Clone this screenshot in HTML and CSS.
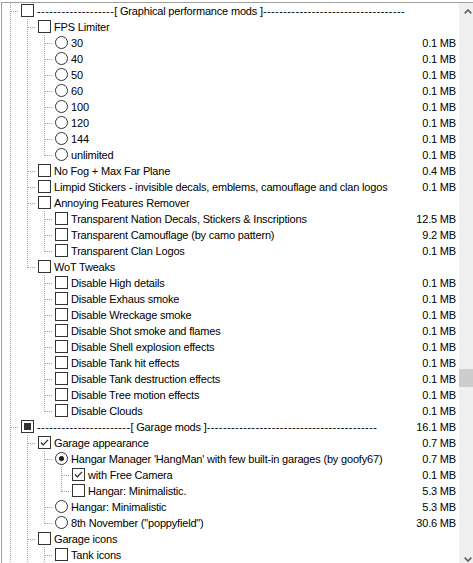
FILE: index.html
```html
<!DOCTYPE html>
<html>
<head>
<meta charset="utf-8">
<link rel="stylesheet" href="styles.css">
</head>
<body>
<div class="frame">
  <div class="tree">
    <div class="row"><span class="g tee"></span><span class="ic cb"></span><span class="lbl"><span class="dash">-------------------</span>[ Graphical performance mods ]<span class="dash">-----------------------------------</span></span></div>
    <div class="row"><span class="g pipe"></span><span class="g tee"></span><span class="ic cb"></span><span class="lbl">FPS Limiter</span></div>
    <div class="row"><span class="g pipe"></span><span class="g pipe"></span><span class="g tee"></span><span class="ic rb"></span><span class="lbl">30</span><span class="sz">0.1 MB</span></div>
    <div class="row"><span class="g pipe"></span><span class="g pipe"></span><span class="g tee"></span><span class="ic rb"></span><span class="lbl">40</span><span class="sz">0.1 MB</span></div>
    <div class="row"><span class="g pipe"></span><span class="g pipe"></span><span class="g tee"></span><span class="ic rb"></span><span class="lbl">50</span><span class="sz">0.1 MB</span></div>
    <div class="row"><span class="g pipe"></span><span class="g pipe"></span><span class="g tee"></span><span class="ic rb"></span><span class="lbl">60</span><span class="sz">0.1 MB</span></div>
    <div class="row"><span class="g pipe"></span><span class="g pipe"></span><span class="g tee"></span><span class="ic rb"></span><span class="lbl">100</span><span class="sz">0.1 MB</span></div>
    <div class="row"><span class="g pipe"></span><span class="g pipe"></span><span class="g tee"></span><span class="ic rb"></span><span class="lbl">120</span><span class="sz">0.1 MB</span></div>
    <div class="row"><span class="g pipe"></span><span class="g pipe"></span><span class="g tee"></span><span class="ic rb"></span><span class="lbl">144</span><span class="sz">0.1 MB</span></div>
    <div class="row"><span class="g pipe"></span><span class="g pipe"></span><span class="g end"></span><span class="ic rb"></span><span class="lbl">unlimited</span><span class="sz">0.1 MB</span></div>
    <div class="row"><span class="g pipe"></span><span class="g tee"></span><span class="ic cb"></span><span class="lbl">No Fog + Max Far Plane</span><span class="sz">0.4 MB</span></div>
    <div class="row"><span class="g pipe"></span><span class="g tee"></span><span class="ic cb"></span><span class="lbl">Limpid Stickers - invisible decals, emblems, camouflage and clan logos</span><span class="sz">0.1 MB</span></div>
    <div class="row"><span class="g pipe"></span><span class="g tee"></span><span class="ic cb"></span><span class="lbl">Annoying Features Remover</span></div>
    <div class="row"><span class="g pipe"></span><span class="g pipe"></span><span class="g tee"></span><span class="ic cb"></span><span class="lbl">Transparent Nation Decals, Stickers &amp; Inscriptions</span><span class="sz">12.5 MB</span></div>
    <div class="row"><span class="g pipe"></span><span class="g pipe"></span><span class="g tee"></span><span class="ic cb"></span><span class="lbl">Transparent Camouflage (by camo pattern)</span><span class="sz">9.2 MB</span></div>
    <div class="row"><span class="g pipe"></span><span class="g pipe"></span><span class="g end"></span><span class="ic cb"></span><span class="lbl">Transparent Clan Logos</span><span class="sz">0.1 MB</span></div>
    <div class="row"><span class="g pipe"></span><span class="g end"></span><span class="ic cb"></span><span class="lbl">WoT Tweaks</span></div>
    <div class="row"><span class="g pipe"></span><span class="g"></span><span class="g tee"></span><span class="ic cb"></span><span class="lbl">Disable High details</span><span class="sz">0.1 MB</span></div>
    <div class="row"><span class="g pipe"></span><span class="g"></span><span class="g tee"></span><span class="ic cb"></span><span class="lbl">Disable Exhaus smoke</span><span class="sz">0.1 MB</span></div>
    <div class="row"><span class="g pipe"></span><span class="g"></span><span class="g tee"></span><span class="ic cb"></span><span class="lbl">Disable Wreckage smoke</span><span class="sz">0.1 MB</span></div>
    <div class="row"><span class="g pipe"></span><span class="g"></span><span class="g tee"></span><span class="ic cb"></span><span class="lbl">Disable Shot smoke and flames</span><span class="sz">0.1 MB</span></div>
    <div class="row"><span class="g pipe"></span><span class="g"></span><span class="g tee"></span><span class="ic cb"></span><span class="lbl">Disable Shell explosion effects</span><span class="sz">0.1 MB</span></div>
    <div class="row"><span class="g pipe"></span><span class="g"></span><span class="g tee"></span><span class="ic cb"></span><span class="lbl">Disable Tank hit effects</span><span class="sz">0.1 MB</span></div>
    <div class="row"><span class="g pipe"></span><span class="g"></span><span class="g tee"></span><span class="ic cb"></span><span class="lbl">Disable Tank destruction effects</span><span class="sz">0.1 MB</span></div>
    <div class="row"><span class="g pipe"></span><span class="g"></span><span class="g tee"></span><span class="ic cb"></span><span class="lbl">Disable Tree motion effects</span><span class="sz">0.1 MB</span></div>
    <div class="row"><span class="g pipe"></span><span class="g"></span><span class="g end"></span><span class="ic cb"></span><span class="lbl">Disable Clouds</span><span class="sz">0.1 MB</span></div>
    <div class="row"><span class="g tee"></span><span class="ic cb mixed"></span><span class="lbl"><span class="dash">-----------------------</span>[ Garage mods ]<span class="dash">------------------------------------------</span></span><span class="sz">16.1 MB</span></div>
    <div class="row"><span class="g pipe"></span><span class="g tee"></span><span class="ic cb"><svg class="chk" viewBox="0 0 11 11"><path d="M2 5.5 L4.3 7.8 L9 2.8"/></svg></span><span class="lbl">Garage appearance</span><span class="sz">0.7 MB</span></div>
    <div class="row"><span class="g pipe"></span><span class="g pipe"></span><span class="g tee"></span><span class="ic rb on"></span><span class="lbl">Hangar Manager 'HangMan' with few built-in garages (by goofy67)</span><span class="sz">0.7 MB</span></div>
    <div class="row"><span class="g pipe"></span><span class="g pipe"></span><span class="g pipe"></span><span class="g tee"></span><span class="ic cb"><svg class="chk" viewBox="0 0 11 11"><path d="M2 5.5 L4.3 7.8 L9 2.8"/></svg></span><span class="lbl">with Free Camera</span><span class="sz">0.1 MB</span></div>
    <div class="row"><span class="g pipe"></span><span class="g pipe"></span><span class="g pipe"></span><span class="g end"></span><span class="ic cb"></span><span class="lbl">Hangar: Minimalistic.</span><span class="sz">5.3 MB</span></div>
    <div class="row"><span class="g pipe"></span><span class="g pipe"></span><span class="g tee"></span><span class="ic rb"></span><span class="lbl">Hangar: Minimalistic</span><span class="sz">5.3 MB</span></div>
    <div class="row"><span class="g pipe"></span><span class="g pipe"></span><span class="g end"></span><span class="ic rb"></span><span class="lbl">8th November ("poppyfield")</span><span class="sz">30.6 MB</span></div>
    <div class="row"><span class="g pipe"></span><span class="g tee"></span><span class="ic cb"></span><span class="lbl">Garage icons</span></div>
    <div class="row"><span class="g pipe"></span><span class="g pipe"></span><span class="g tee"></span><span class="ic cb"></span><span class="lbl">Tank icons</span></div>
  </div>
  <div class="scrollbar">
    <div class="sb-btn"><svg class="arrow" viewBox="0 0 8 5"><path d="M0.7 4.3 L4 1 L7.3 4.3"/></svg></div>
    <div class="sb-track"><div class="sb-thumb"></div></div>
    <div class="sb-btn"><svg class="arrow" viewBox="0 0 8 5"><path d="M0.7 0.7 L4 4 L7.3 0.7"/></svg></div>
  </div>
</div>
</body>
</html>
```

FILE: styles.css
```css
html, body {
  margin: 0;
  padding: 0;
  background: #ffffff;
  overflow: hidden;
  width: 473px;
  height: 563px;
}

.frame {
  margin: 2px 0 0 1px;
  width: 474px;
  height: 565px;
  border-top: 1px solid #a0a0a0;
  border-left: 1px solid #a0a0a0;
  display: flex;
  overflow: hidden;
}

.tree {
  width: 457px;
  flex: none;
  padding-right: 3px;
  box-sizing: border-box;
  font-family: "Liberation Sans", Arial, sans-serif;
  font-size: 11px;
  letter-spacing: -0.18px;
  color: #000000;
}

.row {
  display: flex;
  align-items: flex-start;
  height: 16px;
  line-height: 16px;
  white-space: nowrap;
}

.g {
  flex: none;
  width: 17px;
  height: 16px;
}

.pipe {
  background: repeating-linear-gradient(to bottom, #a0a0a0 0 1px, transparent 1px 2px) 8px 0 / 1px 16px no-repeat;
}

.tee {
  background:
    repeating-linear-gradient(to right, #a0a0a0 0 1px, transparent 1px 2px) 9px 8px / 8px 1px no-repeat,
    repeating-linear-gradient(to bottom, #a0a0a0 0 1px, transparent 1px 2px) 8px 0 / 1px 16px no-repeat;
}

.end {
  background:
    repeating-linear-gradient(to right, #a0a0a0 0 1px, transparent 1px 2px) 9px 8px / 8px 1px no-repeat,
    repeating-linear-gradient(to bottom, #a0a0a0 0 1px, transparent 1px 2px) 8px 0 / 1px 9px no-repeat;
}

.ic {
  flex: none;
  width: 13px;
  height: 13px;
  box-sizing: border-box;
  margin: 1px 3px 0 2px;
  border: 1px solid #333333;
  background: #ffffff;
  position: relative;
}

.rb {
  border-radius: 50%;
}

.rb.on::after {
  content: "";
  position: absolute;
  left: 3px;
  top: 3px;
  width: 5px;
  height: 5px;
  border-radius: 50%;
  background: #1a1a1a;
}

.cb.mixed::after {
  content: "";
  position: absolute;
  left: 2px;
  top: 2px;
  width: 7px;
  height: 7px;
  background: #333333;
}

.chk {
  display: block;
  width: 11px;
  height: 11px;
}

.chk path {
  fill: none;
  stroke: #222222;
  stroke-width: 1.2;
}

.lbl {
  flex: none;
}

.dash {
  letter-spacing: 0.4px;
}

.sz {
  margin-left: auto;
  flex: none;
}

.scrollbar {
  width: 17px;
  flex: none;
  background: #f0f0f0;
  display: flex;
  flex-direction: column;
}

.sb-btn {
  height: 17px;
  flex: none;
  display: flex;
  align-items: center;
  justify-content: center;
}

.arrow {
  width: 8px;
  height: 5px;
}

.arrow path {
  fill: none;
  stroke: #606060;
  stroke-width: 1.7;
}

.sb-track {
  flex: 1;
}

.sb-thumb {
  margin-top: 349px;
  height: 18px;
  background: #cdcdcd;
}
```
